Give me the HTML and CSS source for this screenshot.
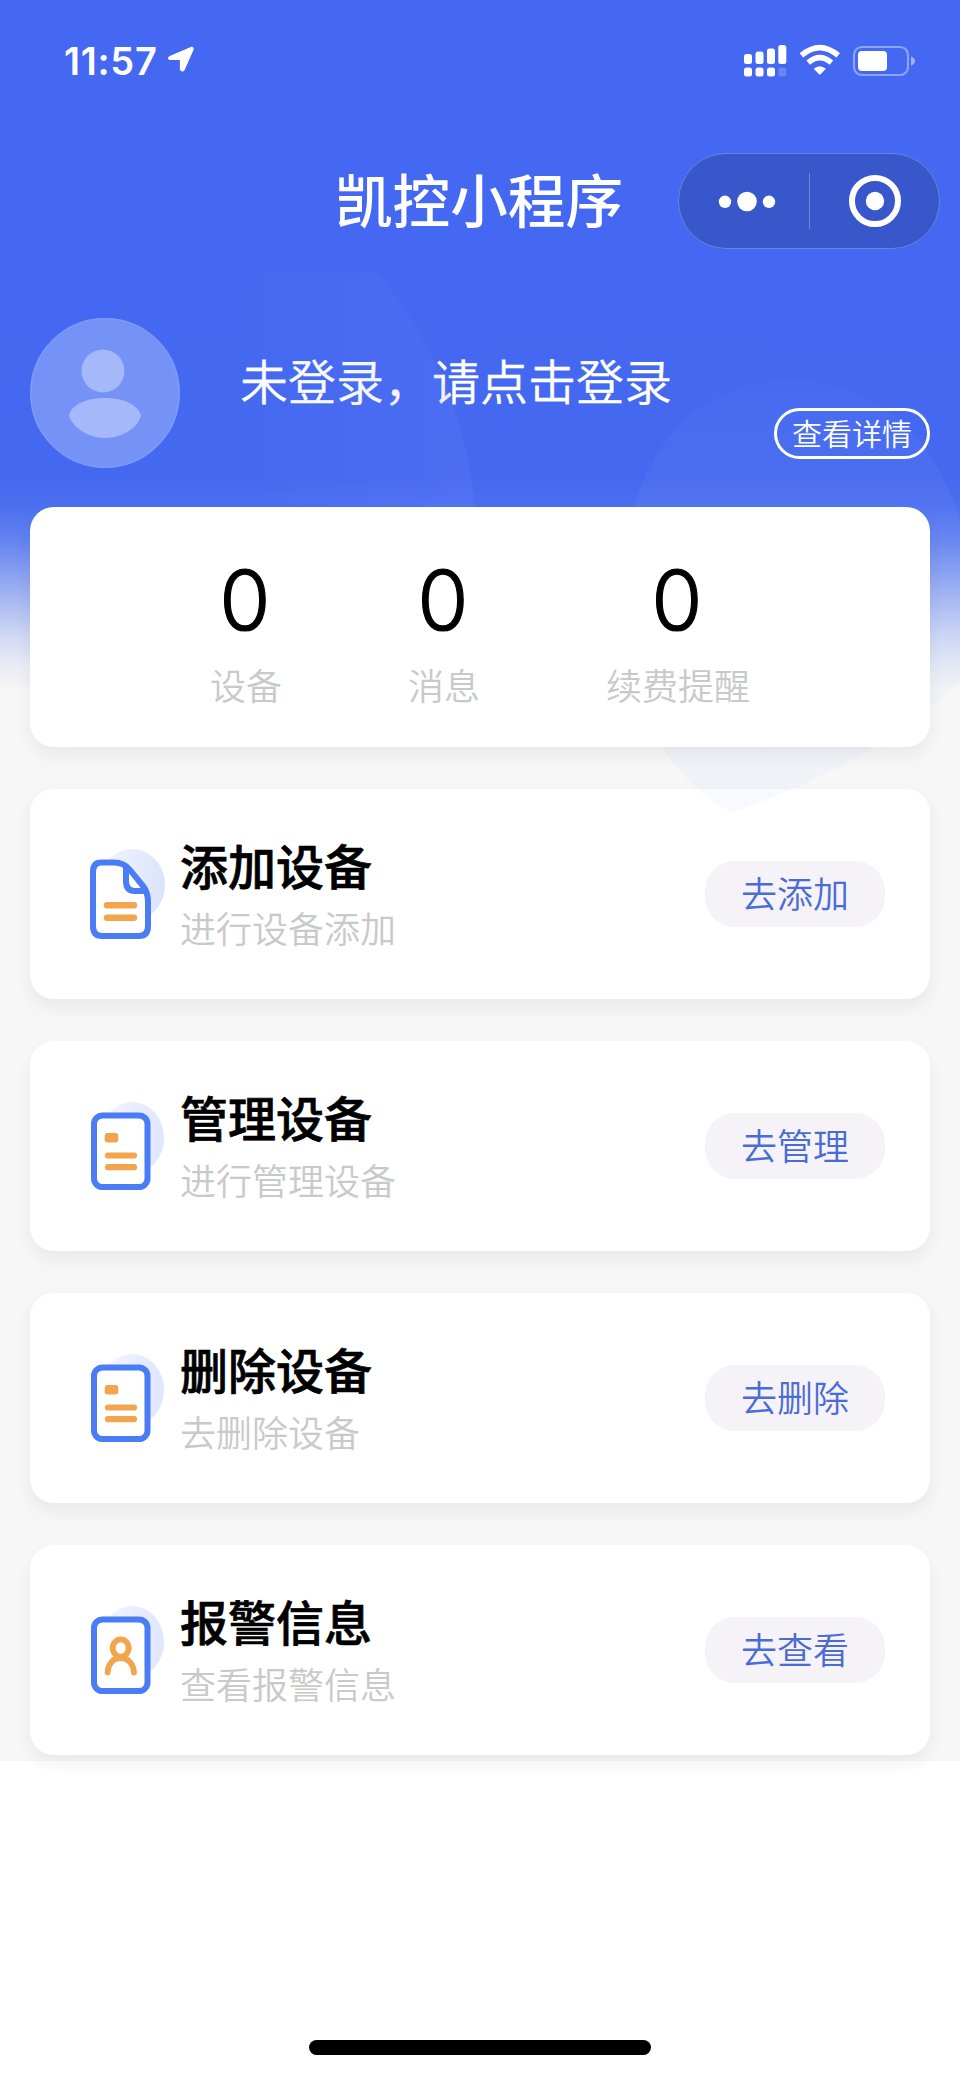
FILE: index.html
```html
<!DOCTYPE html>
<html lang="zh-CN">
<head>
<meta charset="utf-8">
<title>凯控小程序</title>
<link rel="stylesheet" href="styles.css">
</head>
<body>
<svg width="0" height="0" class="defs">
  <defs>
    <linearGradient id="halo" x1="0" y1="0" x2="1" y2="0"><stop offset="0" stop-color="#f4f6fe"/><stop offset="1" stop-color="#d9e4fc"/></linearGradient>
    <linearGradient id="halo-soft" x1="0" y1="0" x2="1" y2="0"><stop offset="0" stop-color="#f4f6fe"/><stop offset="1" stop-color="#dfe6fd"/></linearGradient>
  </defs>
</svg>
<div class="page">
  <svg class="backdrop" width="960" height="840" viewBox="0 0 960 840">
    <defs>
      <linearGradient id="sweep" x1="240" y1="0" x2="475" y2="0" gradientUnits="userSpaceOnUse"><stop offset="0" stop-color="#7a8dff" stop-opacity="0"/><stop offset="1" stop-color="#7a8dff" stop-opacity=".15"/></linearGradient>
      <linearGradient id="petal" x1="0" y1="380" x2="0" y2="812" gradientUnits="userSpaceOnUse"><stop offset="0" stop-color="#fff" stop-opacity=".015"/><stop offset=".35" stop-color="#a9beff" stop-opacity=".07"/><stop offset="1" stop-color="#a9c4ff" stop-opacity=".09"/></linearGradient>
    </defs>
    <path d="M240 273H378Q470 390 475 520H240Z" fill="url(#sweep)"/>
    <path d="M733 812C705 800 680 775 662 747C635 690 618 590 634 507C655 430 715 380 790 380C865 380 930 425 960 520V679Q880 762 733 812Z" fill="url(#petal)"/>
  </svg>
  <header class="status">
    <div class="clock"><span>11:57</span>
      <svg width="28" height="28" viewBox="0 0 28 28"><path d="M3 10.500L24 1.500Q26.500 1 26 3.500L17 24Q15 26 13.500 23.500V13.500H3Q0 12.500 3 10.500Z" fill="#fff" stroke="#fff" stroke-width="1.200"/></svg>
    </div>
    <svg class="signals" width="172" height="34" viewBox="0 0 172 34">
      <g fill="#fff">
        <rect x="0" y="10" width="8" height="10" rx="2.500"/><rect x="11.500" y="7.500" width="8" height="12.500" rx="2.500"/><rect x="23" y="4.500" width="8" height="15.500" rx="2.500"/><rect x="34.300" y="1" width="8" height="19" rx="2.500"/>
        <rect x="0" y="23.500" width="8" height="9" rx="2.500"/><rect x="11.500" y="23.500" width="8" height="9" rx="2.500"/><rect x="23" y="23.500" width="8" height="9" rx="2.500"/><rect x="34.300" y="23.500" width="8" height="9" rx="2.500" opacity=".2"/>
        <path d="M75.800 31L69.700 24.800Q75.800 19.600 81.900 24.800Z"/>
      </g>
      <g fill="none" stroke="#fff" stroke-width="5.400">
        <path d="M57.400 11.400Q75.800-4.200 94.200 11.400"/><path d="M64.200 18.600Q75.800 8.600 87.400 18.600"/>
      </g>
      <rect x="110" y="3" width="54" height="28" rx="8" fill="none" stroke="#fff" stroke-opacity=".4" stroke-width="2.200"/>
      <rect x="114" y="7" width="29" height="20" rx="4" fill="#fff"/>
      <path d="M167 12.500Q171 14 171 17T167 21.500Z" fill="#fff" opacity=".5"/>
    </svg>
  </header>
  <div class="navbar">
    <h1>凯控小程序</h1>
    <div class="capsule">
      <svg width="260" height="94" viewBox="0 0 260 94" fill="#fff">
        <circle cx="46" cy="47.800" r="6.200"/><circle cx="68" cy="47.500" r="9.800"/><circle cx="90" cy="47.800" r="6.200"/>
        <rect x="130" y="19" width="1" height="56" opacity=".3"/>
        <circle cx="196" cy="47" r="23" fill="none" stroke="#fff" stroke-width="6"/><circle cx="196" cy="47" r="9.200"/>
      </svg>
    </div>
  </div>
  <section class="profile">
    <svg class="avatar" width="150" height="150" viewBox="0 0 150 150">
      <circle cx="75" cy="75" r="74.200" fill="#7592f7" stroke="#7f9af8" stroke-width="1.600"/>
      <circle cx="73" cy="53" r="21.500" fill="#a5b8fa"/>
      <path d="M39 97C42 86 57 80 75 80S107 86 111 97C110 107 94 120 75 120S41 107 39 97Z" fill="#a5b8fa"/>
    </svg>
    <p class="hint">未登录，请点击登录</p>
    <a class="detail">查看详情</a>
  </section>
  <section class="stats">
    <div class="stat"><b>0</b><span>设备</span></div>
    <div class="stat"><b>0</b><span>消息</span></div>
    <div class="stat"><b>0</b><span>续费提醒</span></div>
  </section>
  <section class="entry">
    <svg class="icon" width="75" height="90" viewBox="0 0 75 90">
      <ellipse cx="42" cy="36" rx="33" ry="36" fill="url(#halo)"/>
      <path d="M11 13.500H24C32 13.500 36 16 40 21L53 37C57 42 58 46 58 53V77Q58 87 49 87H12Q3 87 3 77V23Q3 13.500 11 13.500Z" fill="#fff" stroke="#4a7cf6" stroke-width="6"/>
      <path d="M36 18V32Q36 42 45 42H57" fill="none" stroke="#4a7cf6" stroke-width="6"/>
      <path d="M17 56.300H44M17 68.700H44" stroke="#f2a54d" stroke-width="6.400" stroke-linecap="round"/>
    </svg>
    <div class="copy"><h2>添加设备</h2><p>进行设备添加</p></div>
    <a class="go">去添加</a>
  </section>
  <section class="entry">
    <svg class="icon" width="75" height="90" viewBox="0 0 75 90">
      <ellipse cx="42" cy="37" rx="32" ry="36" fill="url(#halo-soft)"/>
      <rect x="4" y="14.500" width="53.500" height="71.500" rx="8.500" fill="#fff" stroke="#4a7cf6" stroke-width="6"/>
      <rect x="14.700" y="32" width="13.600" height="9.500" rx="3" fill="#f2a54d"/>
      <path d="M18 54.500H44M18 66.200H44" stroke="#f2a54d" stroke-width="6.200" stroke-linecap="round"/>
    </svg>
    <div class="copy"><h2>管理设备</h2><p>进行管理设备</p></div>
    <a class="go">去管理</a>
  </section>
  <section class="entry">
    <svg class="icon" width="75" height="90" viewBox="0 0 75 90">
      <ellipse cx="42" cy="37" rx="32" ry="36" fill="url(#halo-soft)"/>
      <rect x="4" y="14.500" width="53.500" height="71.500" rx="8.500" fill="#fff" stroke="#4a7cf6" stroke-width="6"/>
      <rect x="14.700" y="32" width="13.600" height="9.500" rx="3" fill="#f2a54d"/>
      <path d="M18 54.500H44M18 66.200H44" stroke="#f2a54d" stroke-width="6.200" stroke-linecap="round"/>
    </svg>
    <div class="copy"><h2>删除设备</h2><p>去删除设备</p></div>
    <a class="go">去删除</a>
  </section>
  <section class="entry">
    <svg class="icon" width="75" height="90" viewBox="0 0 75 90">
      <ellipse cx="42" cy="37" rx="32" ry="36" fill="url(#halo-soft)"/>
      <rect x="4" y="14.500" width="53.500" height="71.500" rx="8.500" fill="#fff" stroke="#4a7cf6" stroke-width="6"/>
      <g fill="none" stroke="#f2a54d" stroke-width="5.800" stroke-linecap="round"><ellipse cx="30.700" cy="43" rx="8" ry="8.700"/><path d="M17.600 67.500C18 59 23 53 30.700 53S43.500 59 44 67.500"/></g>
    </svg>
    <div class="copy"><h2>报警信息</h2><p>查看报警信息</p></div>
    <a class="go">去查看</a>
  </section>
</div>
<div class="home"></div>
</body>
</html>
```
FILE: styles.css
```css
* { box-sizing: border-box; }
body {
  margin: 0;
  height: 2079px;
  overflow: hidden;
  background: #fff;
  font-family: "Noto Sans CJK SC", sans-serif;
  font-weight: 350;
  display: flex;
  flex-direction: column;
}
h1, h2, p { margin: 0; }
svg { display: block; flex: none; }
.defs { position: absolute; }
.page {
  position: relative;
  height: 1761px;
  flex: none;
  background: linear-gradient(#4468f2 0, #4468f0 478px, #4d70f0 508px, #6383f0 540px, #8ba1f1 575px, #b0bff2 608px, #d0d8f4 637px, #e9ebf5 665px, #f7f7f7 692px);
}
.backdrop { position: absolute; left: 0; top: 0; pointer-events: none; z-index: 2; }
.status {
  height: 132px;
  display: flex;
  justify-content: space-between;
  padding: 44px 44px 0 64px;
}
.clock { display: flex; height: 34px; gap: 9px; color: #fff; font: 600 38px/34px Inter, sans-serif; letter-spacing: .7px; }
.clock svg { margin-top: 2px; }
.navbar { height: 138px; display: flex; justify-content: flex-end; padding: 21px 20px 0 0; }
.navbar h1 {
  width: 288px;
  margin-right: 55px;
  color: #fff;
  font-size: 57.600px;
  font-weight: 500;
  line-height: 90px;
}
.capsule {
  width: 262px;
  height: 96px;
  border: 1px solid #6b83dc;
  border-radius: 48px;
  background: #3757cb;
}
.profile { height: 237px; display: flex; padding: 48px 30px 0; }
.hint { margin: 25px 0 0 60px; width: 432px; color: #fff; font-size: 48px; line-height: 72px; white-space: nowrap; -webkit-text-stroke: .3px #fff; }
.detail {
  margin: 90px 0 0 auto;
  width: 156px;
  height: 51px;
  border: 3px solid #fff;
  border-radius: 26px;
  color: #fff;
  font-size: 30px;
  line-height: 43px;
  text-align: center;
}
.stats, .entry {
  margin: 0 30px 42px;
  border-radius: 24px;
  background: #fff;
  box-shadow: 0 9px 18px rgba(0, 0, 0, .06);
  display: flex;
}
.stats { height: 240px; justify-content: center; gap: 126px; padding-top: 43px; position: relative; z-index: 3; }
.stat { display: flex; flex-direction: column; align-items: center; }
.stat b { font: 300 83px/100px Inter, sans-serif; color: #000; -webkit-text-stroke: 1.2px #000; margin-left: -2px; }
.stat span { font-size: 36px; line-height: 54px; margin-top: 7px; color: #c9c9ca; }
.entry { height: 210px; padding: 0 45px 0 60px; }
.icon { margin-top: 60px; }
.copy { margin: 39px 0 0 15px; flex: 1; }
.copy h2 { font-size: 48px; line-height: 72px; font-weight: 500; color: #000; -webkit-text-stroke: .7px #000; }
.copy p { font-size: 36px; line-height: 54px; color: #c9c9ca; }
.go {
  width: 180px;
  height: 66px;
  margin-top: 72px;
  border-radius: 30px;
  background: #f5f3f7;
  color: #4b6bd5;
  font-size: 36px;
  line-height: 62px;
  text-align: center;
}
.home { width: 342px; height: 15px; border-radius: 8px; background: #000; margin: 279px auto 0; flex: none; }
```
